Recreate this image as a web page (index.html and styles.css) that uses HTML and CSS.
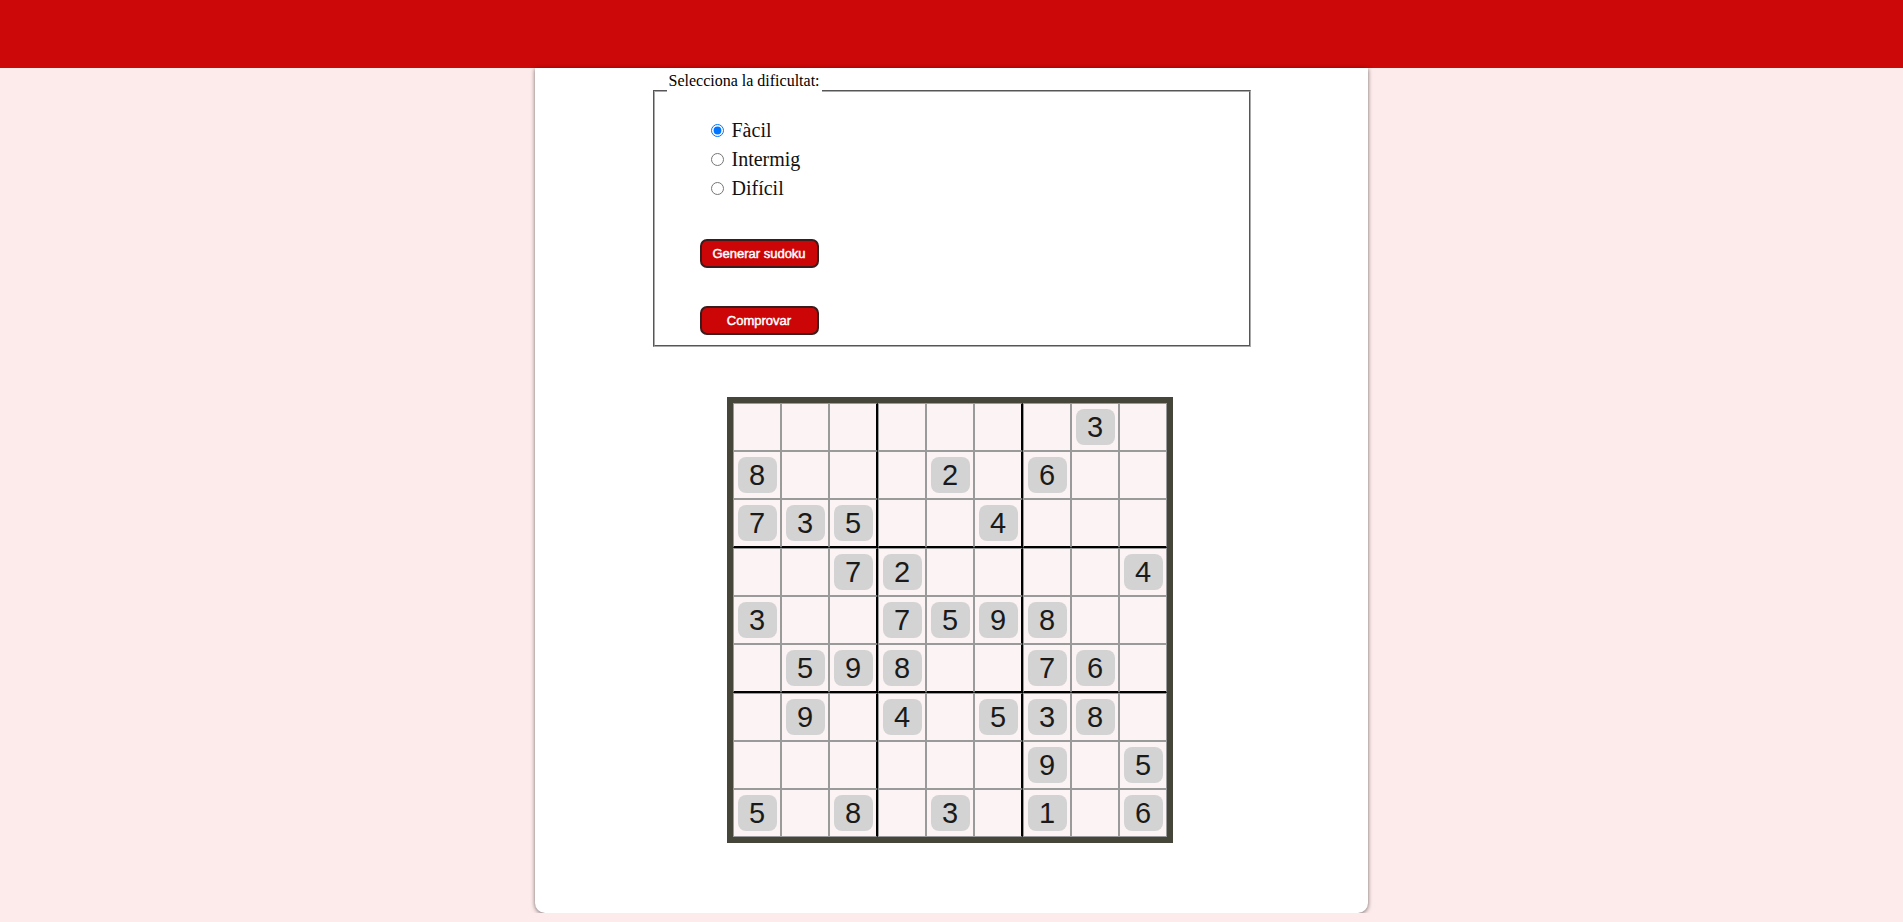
FILE: index.html
```html
<!DOCTYPE html>
<html lang="ca">
<head>
<meta charset="utf-8">
<title>Sudoku</title>
<link rel="stylesheet" href="styles.css">
</head>
<body>
<header class="topbar"></header>
<main class="panel">
  <fieldset class="options">
    <legend class="options-title">Selecciona la dificultat:</legend>
    <div class="levels">
      <label class="level"><input type="radio" name="nivell" checked> Fàcil</label>
      <label class="level"><input type="radio" name="nivell"> Intermig</label>
      <label class="level"><input type="radio" name="nivell"> Difícil</label>
    </div>
    <div class="actions">
      <button class="btn" type="button">Generar sudoku</button>
      <button class="btn" type="button">Comprovar</button>
    </div>
  </fieldset>

  <table class="sudoku">
    <tr><td></td><td></td><td></td><td></td><td></td><td></td><td></td><td><span class="given">3</span></td><td></td></tr>
    <tr><td><span class="given">8</span></td><td></td><td></td><td></td><td><span class="given">2</span></td><td></td><td><span class="given">6</span></td><td></td><td></td></tr>
    <tr><td><span class="given">7</span></td><td><span class="given">3</span></td><td><span class="given">5</span></td><td></td><td></td><td><span class="given">4</span></td><td></td><td></td><td></td></tr>
    <tr><td></td><td></td><td><span class="given">7</span></td><td><span class="given">2</span></td><td></td><td></td><td></td><td></td><td><span class="given">4</span></td></tr>
    <tr><td><span class="given">3</span></td><td></td><td></td><td><span class="given">7</span></td><td><span class="given">5</span></td><td><span class="given">9</span></td><td><span class="given">8</span></td><td></td><td></td></tr>
    <tr><td></td><td><span class="given">5</span></td><td><span class="given">9</span></td><td><span class="given">8</span></td><td></td><td></td><td><span class="given">7</span></td><td><span class="given">6</span></td><td></td></tr>
    <tr><td></td><td><span class="given">9</span></td><td></td><td><span class="given">4</span></td><td></td><td><span class="given">5</span></td><td><span class="given">3</span></td><td><span class="given">8</span></td><td></td></tr>
    <tr><td></td><td></td><td></td><td></td><td></td><td></td><td><span class="given">9</span></td><td></td><td><span class="given">5</span></td></tr>
    <tr><td><span class="given">5</span></td><td></td><td><span class="given">8</span></td><td></td><td><span class="given">3</span></td><td></td><td><span class="given">1</span></td><td></td><td><span class="given">6</span></td></tr>
  </table>
</main>
</body>
</html>
```

FILE: styles.css
```css
html, body {
  margin: 0;
  padding: 0;
}
body {
  background: #fdeaea;
  font-family: "Liberation Serif", "Times New Roman", serif;
  color: #000;
}
.topbar {
  height: 68px;
  background: #cc0808;
}
.panel {
  width: 833px;
  margin: 0 auto;
  background: #fff;
  border-radius: 0 0 10px 10px;
  box-shadow: 0 1px 4px rgba(0, 0, 0, 0.55);
  padding: 4px 0 70px;
  display: flex;
  flex-direction: column;
  align-items: center;
}
.options {
  box-sizing: border-box;
  width: 598px;
  margin: 0;
  padding: 0 12px 10px;
  border: 2px groove rgb(170, 170, 170);
}
.options-title {
  font-size: 16px;
  line-height: 18px;
  padding: 0 2px 19px;
}
.levels {
  display: flex;
  flex-direction: column;
  padding-left: 39px;
  margin-top: 7px;
}
.level {
  font-size: 20px;
  line-height: 29px;
  color: #111;
}
.level input {
  margin: 3px 3px 0 5px;
}
.actions {
  display: flex;
  flex-direction: column;
  align-items: flex-start;
  gap: 38px;
  margin-top: 36px;
  padding-left: 33px;
}
.btn {
  box-sizing: border-box;
  width: 119px;
  height: 29px;
  background: #cc0606;
  color: #fff;
  border: 2px solid #3a1c1c;
  border-radius: 7px;
  font-family: "Liberation Sans", Arial, sans-serif;
  font-size: 13px;
  font-weight: normal;
  padding: 0;
  -webkit-text-stroke: 0.45px #fff;
}
.sudoku {
  margin: 50px 3px 0 0;
  border: 6px solid #45453a;
  border-collapse: separate;
  border-spacing: 0;
  background: #fcf4f4;
}
.sudoku td {
  width: 46px;
  height: 46px;
  padding: 0;
  border: 1px solid #9a9a9a;
  background: #fcf4f4;
  vertical-align: middle;
}
.sudoku td:nth-child(3),
.sudoku td:nth-child(6) {
  border-right: 2px solid #000;
}
.sudoku tr:nth-child(3) td,
.sudoku tr:nth-child(6) td {
  border-bottom: 2px solid #000;
}
.given {
  display: block;
  width: 39px;
  height: 36px;
  margin: 0 auto;
  line-height: 36px;
  border-radius: 8px;
  background: #d3d3d3;
  text-align: center;
  font-family: "Liberation Sans", Arial, sans-serif;
  font-size: 29px;
  color: #1a1a1a;
}
```
